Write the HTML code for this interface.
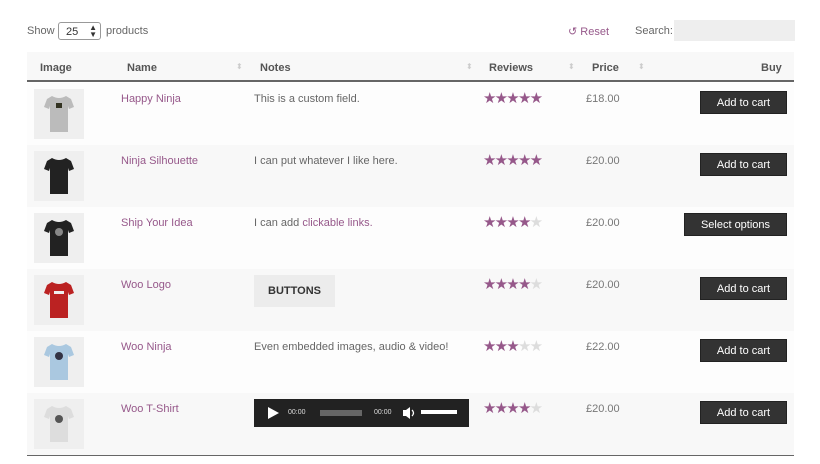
<!DOCTYPE html>
<html><head><meta charset="utf-8"><style>
*{margin:0;padding:0;box-sizing:border-box}
body{width:820px;height:464px;background:#fff;font-family:"Liberation Sans",sans-serif;color:#666;font-size:11px;position:relative;overflow:hidden}
.a{position:absolute}
.row{position:absolute;left:27px;width:767px;height:62px}
.thumb{position:absolute;left:7px;top:6px;width:50px;height:50px;background:#efefef}
.thumb svg{position:absolute;left:10px;top:5px}
.name{position:absolute;left:94px;top:10px;color:#96588a;font-size:11px}
.note{position:absolute;left:227px;top:10px;font-size:11px;color:#666}
.stars{position:absolute;left:456px;top:6px;font-family:"DejaVu Sans",sans-serif;font-size:15px;letter-spacing:-1.8px;color:#96588a}
.stars .e{color:#ddd}
.price{position:absolute;left:559px;top:10px;font-size:11px;color:#777}
.btn{position:absolute;right:7px;top:8px;height:23px;background:#333;color:#fff;font-size:11px;line-height:23px;text-align:center;border:1px solid #222}
.hd{position:absolute;top:62px;font-weight:bold;font-size:11px;color:#555}
.sort{position:absolute;top:62px;color:#ccc;font-size:8px}
</style></head><body>
<div class="a" style="left:27px;top:25px;font-size:11px">Show</div>
<div class="a" style="left:58px;top:22px;width:43px;height:18px;border:1px solid #999;border-radius:3px;font-size:11px;color:#333;padding:3px 0 0 7px">25<span style="position:absolute;right:3px;top:1px;font-size:8px;line-height:7px;color:#333">▲<br>▼</span></div>
<div class="a" style="left:106px;top:25px">products</div>
<div class="a" style="left:568px;top:25px;color:#96588a">↺ Reset</div>
<div class="a" style="left:635px;top:25px">Search:</div>
<div class="a" style="left:674px;top:20px;width:121px;height:21px;background:#eee"></div>
<div class="a" style="left:27px;top:52px;width:767px;height:30px;background:#f8f8f8;border-bottom:2px solid #666"></div>
<div class="hd" style="left:40px">Image</div>
<div class="hd" style="left:127px">Name</div>
<div class="sort" style="left:236px">⬍</div>
<div class="hd" style="left:260px">Notes</div>
<div class="sort" style="left:466px">⬍</div>
<div class="hd" style="left:489px">Reviews</div>
<div class="sort" style="left:568px">⬍</div>
<div class="hd" style="left:592px">Price</div>
<div class="sort" style="left:638px">⬍</div>
<div class="hd" style="left:761px">Buy</div>

<div class="row" style="top:83px;background:#fdfdfd">
<div class="thumb"><svg width="30" height="40" viewBox="0 0 30 40"><path d="M8 2 L3 5 L0 13 L5 15 L6 12 L6 38 L24 38 L24 12 L25 15 L30 13 L27 5 L22 2 Q15 6 8 2Z" fill="#bbb"/><rect x="12" y="9" width="6" height="5" fill="#332"/></svg></div>
<div class="name">Happy Ninja</div><div class="note">This is a custom field.</div>
<div class="stars">★★★★★</div><div class="price">£18.00</div>
<div class="btn" style="width:87px">Add to cart</div></div>

<div class="row" style="top:145px;background:#f8f8f8">
<div class="thumb"><svg width="30" height="40" viewBox="0 0 30 40"><path d="M8 2 L3 5 L0 13 L5 15 L6 12 L6 38 L24 38 L24 12 L25 15 L30 13 L27 5 L22 2 Q15 6 8 2Z" fill="#222"/></svg></div>
<div class="name">Ninja Silhouette</div><div class="note">I can put whatever I like here.</div>
<div class="stars">★★★★★</div><div class="price">£20.00</div>
<div class="btn" style="width:87px">Add to cart</div></div>

<div class="row" style="top:207px;background:#fdfdfd">
<div class="thumb"><svg width="30" height="40" viewBox="0 0 30 40"><path d="M8 2 L3 5 L0 13 L5 15 L6 12 L6 38 L24 38 L24 12 L25 15 L30 13 L27 5 L22 2 Q15 6 8 2Z" fill="#222"/><circle cx="15" cy="14" r="4" fill="#888"/></svg></div>
<div class="name">Ship Your Idea</div><div class="note">I can add <span style="color:#96588a">clickable links.</span></div>
<div class="stars">★★★★<span class="e">★</span></div><div class="price">£20.00</div>
<div class="btn" style="width:103px;top:6px">Select options</div></div>

<div class="row" style="top:269px;background:#f8f8f8">
<div class="thumb"><svg width="30" height="40" viewBox="0 0 30 40"><path d="M8 2 L3 5 L0 13 L5 15 L6 12 L6 38 L24 38 L24 12 L25 15 L30 13 L27 5 L22 2 Q15 6 8 2Z" fill="#b22"/><rect x="10" y="11" width="10" height="3" fill="#eee"/></svg></div>
<div class="name">Woo Logo</div>
<div class="a" style="left:227px;top:6px;width:81px;height:32px;background:#ececec;color:#333;font-weight:bold;font-size:11px;text-align:center;line-height:33px">BUTTONS</div>
<div class="stars">★★★★<span class="e">★</span></div><div class="price">£20.00</div>
<div class="btn" style="width:87px">Add to cart</div></div>

<div class="row" style="top:331px;background:#fdfdfd">
<div class="thumb"><svg width="30" height="40" viewBox="0 0 30 40"><path d="M8 2 L3 5 L0 13 L5 15 L6 12 L6 38 L24 38 L24 12 L25 15 L30 13 L27 5 L22 2 Q15 6 8 2Z" fill="#aac8e0"/><circle cx="15" cy="14" r="4" fill="#334"/></svg></div>
<div class="name">Woo Ninja</div><div class="note">Even embedded images, audio &amp; video!</div>
<div class="stars">★★★<span class="e">★★</span></div><div class="price">£22.00</div>
<div class="btn" style="width:87px">Add to cart</div></div>

<div class="row" style="top:393px;background:#f8f8f8">
<div class="thumb"><svg width="30" height="40" viewBox="0 0 30 40"><path d="M8 2 L3 5 L0 13 L5 15 L6 12 L6 38 L24 38 L24 12 L25 15 L30 13 L27 5 L22 2 Q15 6 8 2Z" fill="#ddd"/><circle cx="15" cy="15" r="4" fill="#555"/></svg></div>
<div class="name">Woo T-Shirt</div>
<div class="a" style="left:227px;top:6px;width:215px;height:28px;background:#222">
<svg class="a" style="left:14px;top:8px" width="11" height="12"><path d="M0 0 L11 6 L0 12Z" fill="#fff"/></svg>
<div class="a" style="left:34px;top:10px;font-size:7px;color:#ddd">00:00</div>
<div class="a" style="left:66px;top:11px;width:42px;height:6px;background:#666"></div>
<div class="a" style="left:120px;top:10px;font-size:7px;color:#ddd">00:00</div>
<svg class="a" style="left:149px;top:7px" width="14" height="14"><path d="M0 4 H3 L7 1 V13 L3 10 H0Z" fill="#fff"/><path d="M9 4 Q12 7 9 10" stroke="#fff" fill="none" stroke-width="1.3"/></svg>
<div class="a" style="left:167px;top:11px;width:36px;height:4px;background:#fff"></div>
</div>
<div class="stars">★★★★<span class="e">★</span></div><div class="price">£20.00</div>
<div class="btn" style="width:87px">Add to cart</div></div>

<div class="a" style="left:27px;top:455px;width:767px;height:1px;background:#666"></div>
</body></html>
